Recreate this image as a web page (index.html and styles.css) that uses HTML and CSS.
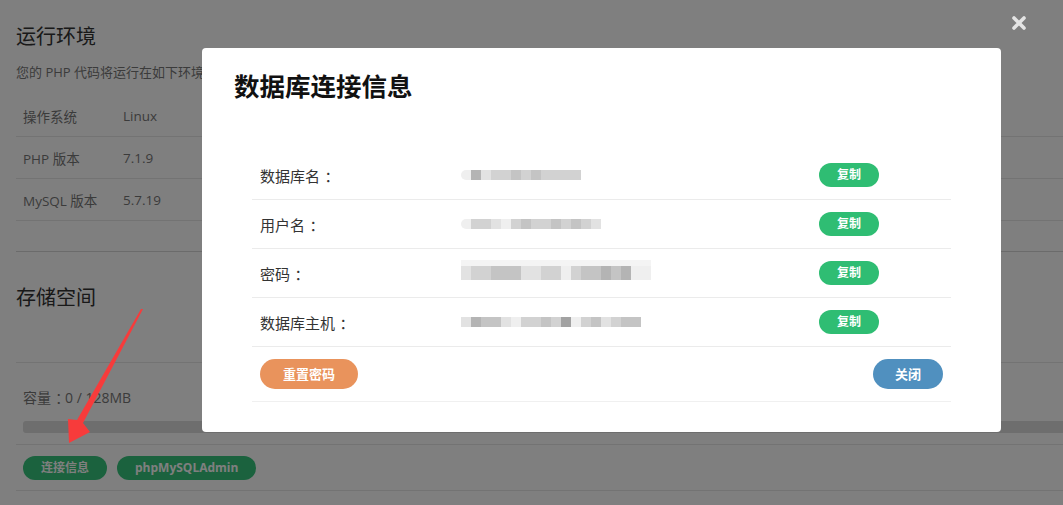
FILE: index.html
```html
<!DOCTYPE html>
<html lang="zh-CN">
<head>
<meta charset="utf-8">
<title>数据库连接信息</title>
<link rel="stylesheet" href="styles.css">
</head>
<body>
<div class="page">
  <h2 class="sec-title">运行环境</h2>
  <p class="desc">您的 PHP 代码将运行在如下环境中，请确认您的代码兼容该运行环境。</p>
  <div class="env-table">
    <div class="env-row"><span class="k">操作系统</span><span class="v">Linux</span></div>
    <div class="env-row"><span class="k">PHP 版本</span><span class="v">7.1.9</span></div>
    <div class="env-row"><span class="k">MySQL 版本</span><span class="v">5.7.19</span></div>
  </div>
  <div class="divider"></div>
  <h2 class="sec-title storage">存储空间</h2>
  <div class="line"></div>
  <div class="cap">容量<span class="colon">：</span>0 / 128MB</div>
  <div class="bar"></div>
  <div class="line"></div>
  <div class="btns">
    <span class="gbtn">连接信息</span>
    <span class="gbtn">phpMySQLAdmin</span>
  </div>
  <div class="line"></div>
</div>

<div class="overlay"></div>

<svg class="close-x" width="16" height="16" viewBox="0 0 16 16"><path d="M3 3 L13 13 M13 3 L3 13" stroke="#e4e4e4" stroke-width="3.6" stroke-linecap="round"/></svg>

<div class="modal">
  <h1 class="m-title">数据库连接信息</h1>
  <div class="info">
    <div class="irow">
      <span class="lab">数据库名<span class="colon">：</span></span>
      <span class="blur"><i class="s a r"></i><i class="s e"></i><i class="s b"></i><i class="s c"></i><i class="s c"></i><i class="s d"></i><i class="s c"></i><i class="s d"></i><i class="s c"></i><i class="s c"></i><i class="s c"></i><i class="s c"></i></span>
      <span class="cell-btn"><span class="copy">复制</span></span>
    </div>
    <div class="irow">
      <span class="lab">用户名<span class="colon">：</span></span>
      <span class="blur"><i class="s a r"></i><i class="s c"></i><i class="s c"></i><i class="s b"></i><i class="s a"></i><i class="s c"></i><i class="s d"></i><i class="s c"></i><i class="s c"></i><i class="s d"></i><i class="s c"></i><i class="s d"></i><i class="s c"></i><i class="s b"></i></span>
      <span class="cell-btn"><span class="copy">复制</span></span>
    </div>
    <div class="irow">
      <span class="lab">密码<span class="colon">：</span></span>
      <span class="blur tall"><i class="s b"></i><i class="s c"></i><i class="s c"></i><i class="s d"></i><i class="s d"></i><i class="s d"></i><i class="s b"></i><i class="s b"></i><i class="s c"></i><i class="s c"></i><i class="s a"></i><i class="s c"></i><i class="s d"></i><i class="s d"></i><i class="s e"></i><i class="s d"></i><i class="s e"></i><i class="s a"></i><i class="s a"></i></span>
      <span class="cell-btn"><span class="copy">复制</span></span>
    </div>
    <div class="irow">
      <span class="lab">数据库主机<span class="colon">：</span></span>
      <span class="blur"><i class="s b"></i><i class="s e"></i><i class="s d"></i><i class="s d"></i><i class="s b"></i><i class="s a"></i><i class="s c"></i><i class="s c"></i><i class="s d"></i><i class="s c"></i><i class="s f"></i><i class="s a"></i><i class="s c"></i><i class="s d"></i><i class="s b"></i><i class="s c"></i><i class="s d"></i><i class="s d"></i></span>
      <span class="cell-btn"><span class="copy">复制</span></span>
    </div>
    <div class="frow">
      <span class="obtn">重置密码</span>
      <span class="bbtn">关闭</span>
    </div>
  </div>
</div>

<svg class="arrow" width="1063" height="505" viewBox="0 0 1063 505">
  <polygon points="143,309 83,423 90,432 69,443 68,419 77,420 141,309" fill="#f73b3b"/>
</svg>
</body>
</html>
```

FILE: styles.css
```css
* { box-sizing: border-box; }
html, body { margin: 0; padding: 0; }
body {
  width: 1063px;
  height: 505px;
  overflow: hidden;
  background: #fff;
  font-family: "Open Sans", "Noto Sans CJK SC", sans-serif;
  color: #666;
}
.page {
  padding-left: 16px;
}
.sec-title {
  margin: 0;
  padding-top: 24px;
  font-size: 20px;
  line-height: 26px;
  font-weight: normal;
  color: #333;
}
.desc {
  margin: 12px 0 0;
  width: 186px;
  overflow: hidden;
  font-size: 13px;
  line-height: 20px;
  color: #777;
  white-space: nowrap;
}
.env-table {
  margin-top: 13px;
}
.env-row {
  display: flex;
  height: 42px;
  align-items: center;
  border-bottom: 1px solid #e6e6e6;
  font-size: 13.5px;
  color: #777;
}
.env-row .k {
  width: 107px;
  padding-left: 7px;
}
.divider {
  margin-top: 30px;
  height: 1px;
  background: #d6d6d6;
}
.sec-title.storage {
  padding-top: 33px;
}
.line {
  height: 1px;
  background: #e6e6e6;
}
.storage + .line {
  margin-top: 51px;
}
.cap {
  padding-left: 7px;
  margin-top: 25px;
  font-size: 14px;
  line-height: 20px;
  color: #777;
}
.colon {
  display: inline-block;
  font-feature-settings: "halt" 1;
  padding-left: 0.3em;
  padding-right: 0.2em;
}
.bar {
  margin: 13px 0 11px 7px;
  height: 12px;
  border-radius: 3px 0 0 3px;
  background: #dcdcdc;
}
.btns {
  display: flex;
  gap: 10px;
  padding: 11px 0 10px 7px;
}
.gbtn {
  height: 24px;
  line-height: 24px;
  padding: 0 18px;
  border-radius: 12px;
  background: #36c47c;
  color: #fff;
  font-size: 12px;
  font-weight: bold;
}
.overlay {
  position: fixed;
  inset: 0;
  background: rgba(0, 0, 0, 0.5);
}
.close-x {
  position: fixed;
  left: 1011px;
  top: 15px;
}
.modal {
  position: fixed;
  left: 202px;
  top: 48px;
  width: 799px;
  height: 384px;
  background: #fff;
  border-radius: 4px;
  padding: 24px 50px 0 32px;
}
.m-title {
  margin: 0;
  font-size: 25.5px;
  line-height: 28px;
  font-weight: bold;
  color: #111;
}
.info {
  margin: 51px 0 0 18px;
}
.irow {
  display: grid;
  grid-template-columns: 201px 358px 1fr;
  align-items: center;
  height: 49px;
  border-bottom: 1px solid #ebebeb;
  font-size: 15px;
  color: #333;
}
.lab {
  padding-left: 8px;
}
.blur {
  display: flex;
  padding-left: 8px;
  filter: blur(0.4px);
}
.s {
  display: block;
  width: 10px;
  height: 10px;
}
.s.r { border-radius: 5px 0 0 5px; }
.blur.tall .s { height: 14px; box-shadow: 0 -6px 0 #f4f4f4; }
.a { background: #efefef; }
.b { background: #e2e2e2; }
.c { background: #d2d2d2; }
.d { background: #c4c4c4; }
.e { background: #b4b4b4; }
.f { background: #a2a2a2; }
.cell-btn { padding-left: 8px; }
.copy {
  display: inline-block;
  width: 60px;
  height: 24px;
  line-height: 24px;
  text-align: center;
  border-radius: 12px;
  background: #2fbd73;
  color: #fff;
  font-size: 12px;
  font-weight: bold;
}
.frow {
  display: flex;
  justify-content: space-between;
  align-items: center;
  height: 55px;
  padding: 0 8px;
  border-bottom: 1px solid #f0f0f0;
}
.obtn, .bbtn {
  height: 30px;
  line-height: 30px;
  border-radius: 15px;
  color: #fff;
  font-size: 13px;
  font-weight: bold;
  text-align: center;
}
.obtn {
  width: 98px;
  background: #e9935c;
}
.bbtn {
  width: 70px;
  background: #5090bf;
}
.arrow {
  position: fixed;
  left: 0;
  top: 0;
  pointer-events: none;
}
```
